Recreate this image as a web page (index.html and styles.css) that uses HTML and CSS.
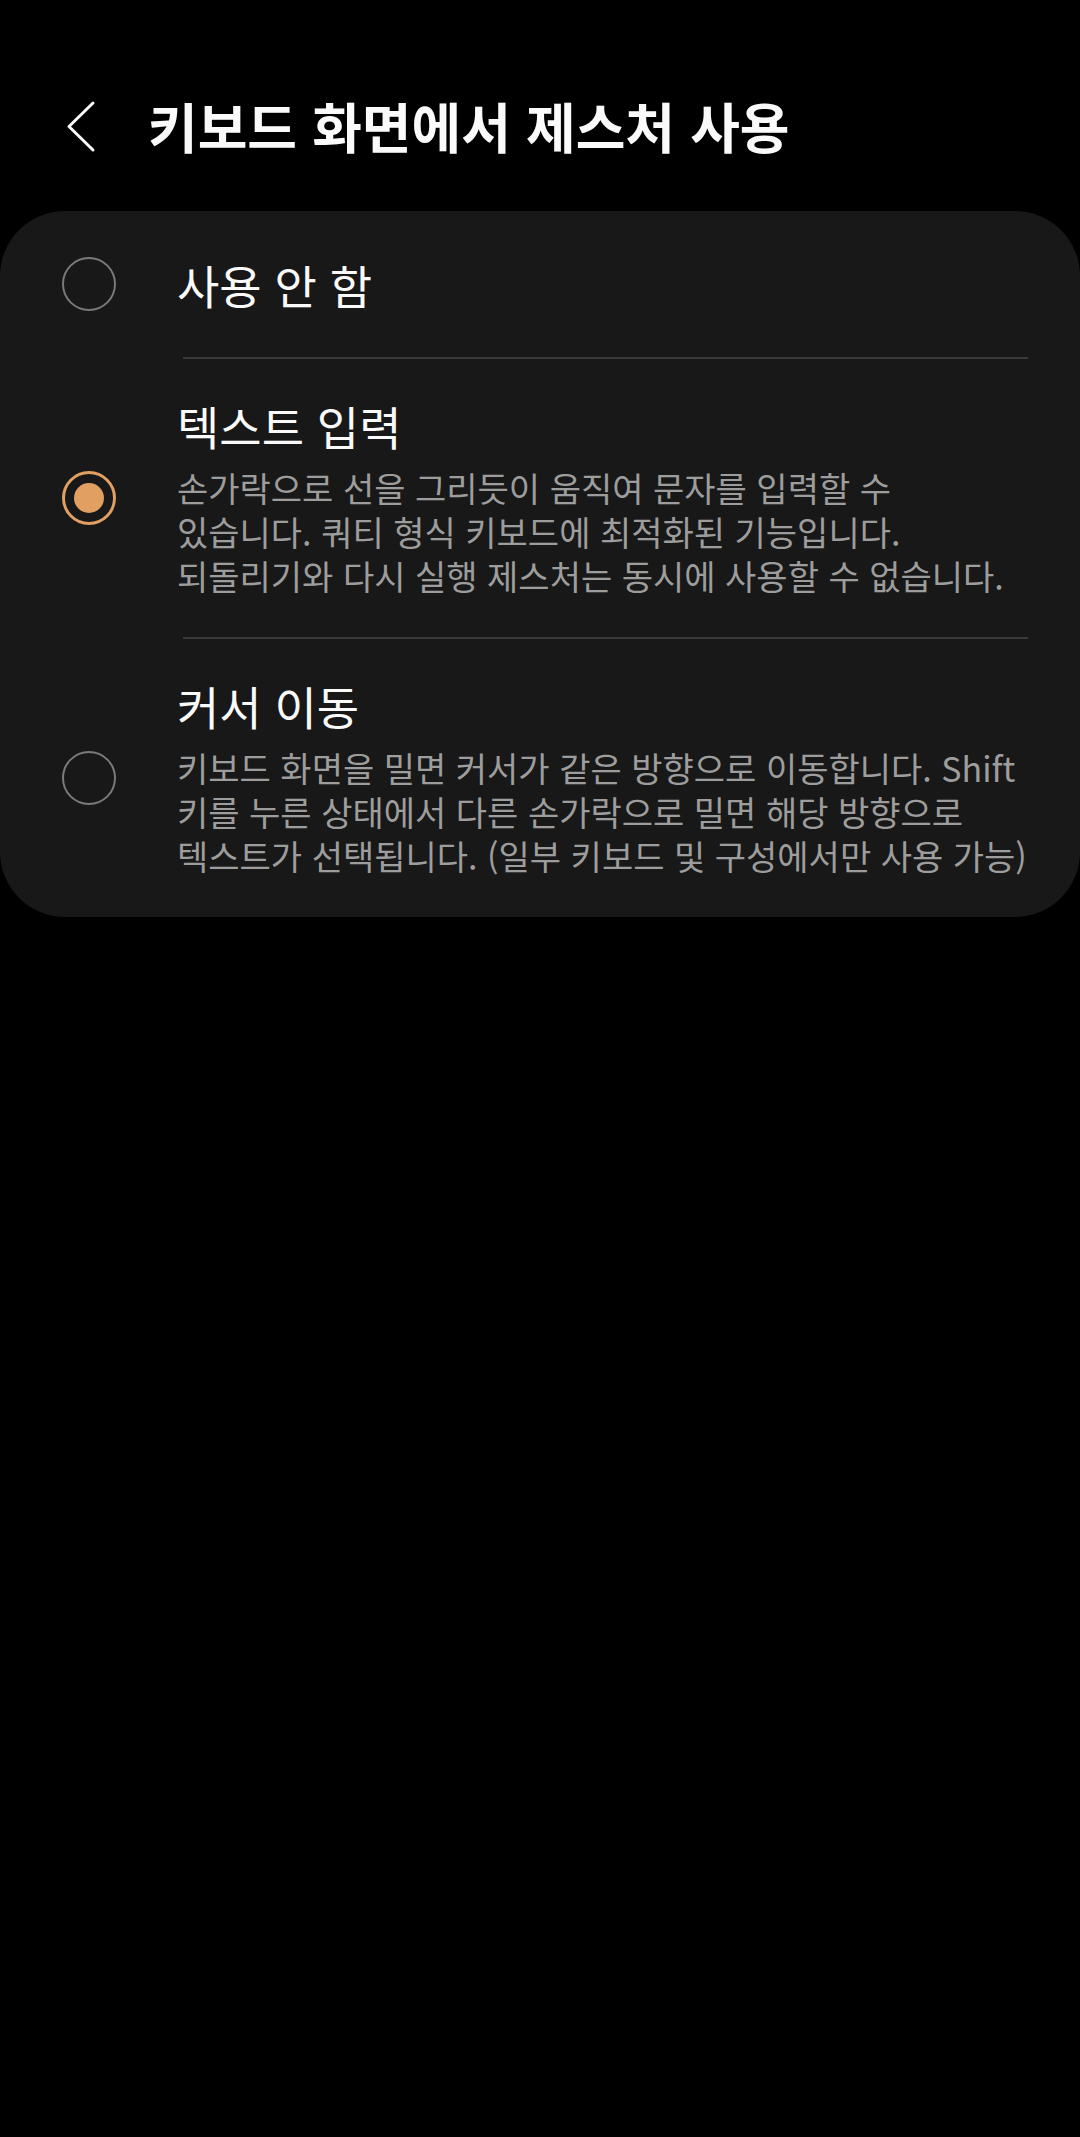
FILE: index.html
```html
<!DOCTYPE html>
<html lang="ko">

<head>
    <meta charset="UTF-8">
    <meta name="viewport" content="width=device-width, initial-scale=1.0">
    <title>키보드 화면에서 제스처 사용</title>
    <link rel="stylesheet" href="styles.css">
</head>

<body>
    <div class='top_bar'>
        <svg class='back_btn' width='32' height='56' viewBox='0 0 32 56'>
            <polyline points='27,5 3,28.5 27,52' fill='none' stroke='#fafafa' stroke-width='3' stroke-linecap='round' stroke-linejoin='round' />
        </svg>
        <div class='top_title'>키보드 화면에서 제스처 사용</div>
    </div>

    <div class='option_card'>
        <div class='option_row first'>
            <div class='radio'></div>
            <div class='option_text'>
                <div class='option_label'>사용 안 함</div>
            </div>
        </div>
        <div class='divider'></div>
        <div class='option_row'>
            <div class='radio checked'></div>
            <div class='option_text'>
                <div class='option_label'>텍스트 입력</div>
                <div class='option_desc'>손가락으로 선을 그리듯이 움직여 문자를 입력할 수<br>있습니다. 쿼티 형식 키보드에 최적화된 기능입니다.<br>되돌리기와 다시 실행 제스처는 동시에 사용할 수 없습니다.</div>
            </div>
        </div>
        <div class='divider'></div>
        <div class='option_row'>
            <div class='radio'></div>
            <div class='option_text'>
                <div class='option_label'>커서 이동</div>
                <div class='option_desc'>키보드 화면을 밀면 커서가 같은 방향으로 이동합니다. Shift<br>키를 누른 상태에서 다른 손가락으로 밀면 해당 방향으로<br>텍스트가 선택됩니다. (일부 키보드 및 구성에서만 사용 가능)</div>
            </div>
        </div>
    </div>
</body>

</html>
```

FILE: styles.css
```css
body {
    margin: 0;
    background: #000;
    min-height: 2137px;
    font-family: "Noto Sans CJK KR", "Noto Sans", sans-serif;
    color: #fafafa;
}

.top_bar {
    display: flex;
    align-items: center;
    padding: 92px 0 51px 66px;
}

.back_btn {
    flex: none;
    margin-right: 50px;
}

.top_title {
    font-size: 54px;
    font-weight: 700;
    line-height: 68px;
    white-space: nowrap;
}

.option_card {
    background: #181818;
    border-radius: 65px;
}

.option_row {
    display: flex;
    align-items: center;
    padding: 38px 16px 39px 62px;
}

.option_row.first {
    padding-top: 45px;
    padding-bottom: 45px;
}

/* radio buttons */
.radio {
    flex: none;
    width: 54px;
    height: 54px;
    box-sizing: border-box;
    border: 2.5px solid #7a7a7a;
    border-radius: 50%;
    margin-right: 61px;
    display: grid;
    place-items: center;
}

.radio.checked {
    border: 3px solid #e29f62;
}

.radio.checked:after {
    content: '';
    width: 30px;
    height: 30px;
    border-radius: 50%;
    background: #e29f62;
}

.option_text {
    flex: 1;
    min-width: 0;
}

.option_label {
    font-size: 46px;
    line-height: 56px;
    color: #fafafa;
}

.option_desc {
    margin-top: 13px;
    font-size: 34px;
    line-height: 44px;
    color: #9d9d9d;
    word-break: keep-all;
}

.divider {
    height: 2px;
    background: #3a3a3a;
    margin: 0 52px 0 183px;
}
```
